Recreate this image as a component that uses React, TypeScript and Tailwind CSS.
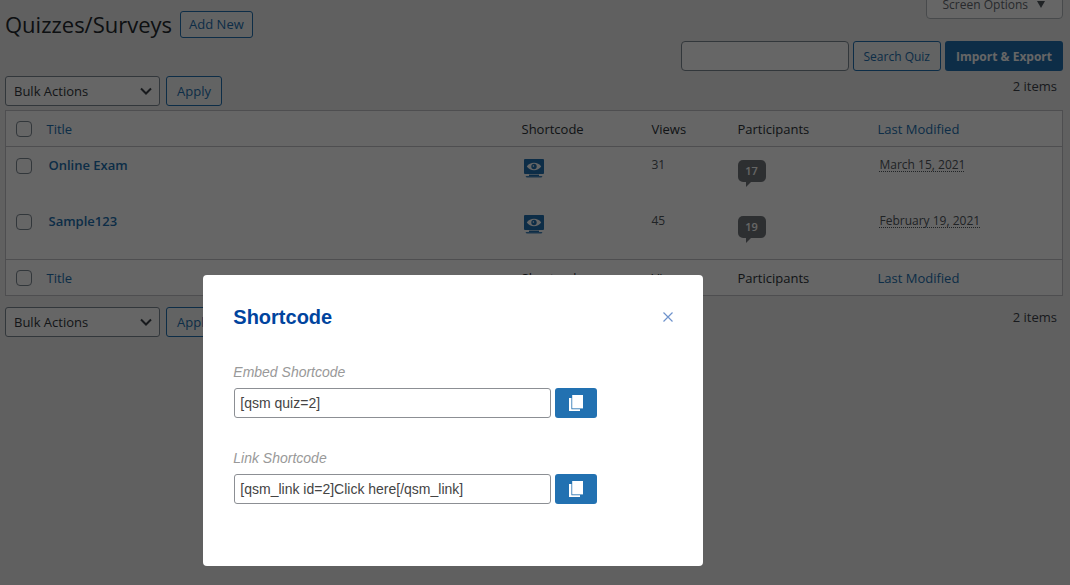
import { useState } from 'react'

interface Quiz {
  id: number
  title: string
  views: number
  participants: number
  modified: string
}

const QUIZZES: Quiz[] = [
  { id: 1, title: 'Online Exam', views: 31, participants: 17, modified: 'March 15, 2021' },
  { id: 2, title: 'Sample123', views: 45, participants: 19, modified: 'February 19, 2021' },
]

const CHECKBOX = 'block size-4 appearance-none rounded-sm border border-[#7e8993] bg-white checked:bg-[#2271b1]'
const BUTTON = 'h-[30px] rounded-[3px] border border-[#2271b1] bg-[#f6f7f7] px-2.5 pt-px text-[#2271b1]'

function ShortcodeIcon() {
  return (
    <svg width="20" height="20" viewBox="0 0 20 20" fill="none" aria-hidden="true">
      <rect x="0" y="0" width="20" height="15" rx="1" fill="#2271b1" />
      <path d="M2.8 7.5C6 2.6 14 2.6 17.2 7.5C14 12.4 6 12.4 2.8 7.5Z" fill="#fff" />
      <circle cx="10" cy="7.5" r="2.7" fill="#2271b1" />
      <circle cx="9.4" cy="7" r="0.8" fill="#fff" />
      <path d="M5 15.6H15V17H5Z" fill="#2271b1" />
      <path d="M1.5 17H18.5L17.5 18.6H2.5Z" fill="#2271b1" fillOpacity="0.85" />
    </svg>
  )
}

function CopyIcon() {
  return (
    <svg width="16" height="18" viewBox="0 0 16 18" fill="none" aria-hidden="true">
      <path d="M1 4H3.4V15.2H12V17H1Z" fill="#fff" />
      <path d="M4.2 1H15V14.4H4.2Z" fill="#fff" />
    </svg>
  )
}

function HeadingRow({ id }: { id: string }) {
  return (
    <tr className="h-9 text-left text-[13px] text-[#2c3338]">
      <th className="pl-2.5">
        <input id={id} type="checkbox" aria-label="Select all" className={CHECKBOX} />
      </th>
      <th className="px-2 pt-0.5 font-normal"><a href="#title" className="text-[#2271b1]">Title</a></th>
      <th className="px-2 pt-0.5 font-normal">Shortcode</th>
      <th className="px-2 pt-0.5 font-normal">Views</th>
      <th className="px-2 pt-0.5 font-normal">Participants</th>
      <th className="px-2 pt-0.5 font-normal"><a href="#modified" className="text-[#2271b1]">Last Modified</a></th>
    </tr>
  )
}

function BulkActions({ id }: { id: string }) {
  return (
    <div className="flex items-start gap-1.5">
      <div className="relative">
        <select
          id={id}
          aria-label="Bulk actions"
          className="h-[30px] w-[155px] appearance-none rounded-[3px] border border-[#7e8993] bg-white px-2 pt-px text-[13px] text-[#32373c]"
        >
          <option>Bulk Actions</option>
          <option>Delete</option>
        </select>
        <svg className="pointer-events-none absolute top-2.5 right-2" width="12" height="10" viewBox="0 0 12 10" fill="none" aria-hidden="true">
          <path d="M1 2.5L6 7.5L11 2.5" stroke="#3c434a" strokeWidth="2" />
        </svg>
      </div>
      <button type="button" className={`${BUTTON} text-[13px]`}>Apply</button>
      <span className="ml-auto pr-1.5 text-[13px] leading-5 text-[#3c434a]">2 items</span>
    </div>
  )
}

function ShortcodeField({ id, label, value }: { id: string; label: string; value: string }) {
  return (
    <div>
      <label htmlFor={id} className="mb-1.5 block text-sm leading-5 text-[#999] italic">{label}</label>
      <div className="flex gap-1 pl-px">
        <input
          id={id}
          type="text"
          readOnly
          value={value}
          className="h-[30px] w-[317px] rounded-[3px] border border-[#8c8f94] bg-white px-[5px] text-sm text-[#444]"
        />
        <button
          type="button"
          aria-label={`Copy ${label}`}
          onClick={() => navigator.clipboard?.writeText(value)}
          className="flex h-[30px] w-[42px] items-center justify-center rounded-[3px] bg-[#2271b1]"
        >
          <CopyIcon />
        </button>
      </div>
    </div>
  )
}

export default function App() {
  const [open, setOpen] = useState(true)

  return (
    <div className="min-h-screen overflow-hidden bg-[#f1f1f1] pr-[7px] pl-[5px] font-['Open_Sans','Noto_Sans',sans-serif]">
      <header className="flex h-[41px] items-start justify-between">
        <div className="flex items-center gap-2 pt-2">
          <h1 className="text-[22px] leading-8 text-[#23282d]">Quizzes/Surveys</h1>
          <a href="#new" className="rounded-[3px] border border-[#2271b1] bg-[#f6f7f7] px-2 text-[13px] leading-[25px] font-medium text-[#2271b1]">Add New</a>
        </div>
        <button type="button" className="-mt-2.5 flex h-[29px] items-center gap-2 rounded-b-sm border border-[#b4b9be] bg-white px-4 text-xs text-[#646970]">
          Screen Options
          <svg width="10" height="9" viewBox="0 0 10 9" aria-hidden="true">
            <path d="M1 1H9L5 8Z" fill="#50575e" />
          </svg>
        </button>
      </header>

      <form className="flex justify-end gap-1" onSubmit={e => e.preventDefault()}>
        <input type="search" aria-label="Search quiz" className="h-[30px] w-[168px] rounded-sm border border-[#7e8993] bg-white px-2 text-[13px]" />
        <button type="submit" className={`${BUTTON} text-xs`}>Search Quiz</button>
        <button type="button" className="h-[30px] rounded-[3px] bg-[#2271b1] px-[11px] pt-px text-xs font-bold text-white">Import &amp; Export</button>
      </form>

      <div className="mt-[5px] mb-1">
        <BulkActions id="bulk-top" />
      </div>

      <table className="w-full table-fixed border-collapse border border-[#c3c4c7] bg-white">
        <colgroup>
          <col className="w-[33px]" />
          <col />
          <col className="w-[130px]" />
          <col className="w-[86px]" />
          <col className="w-[140px]" />
          <col className="w-[193px]" />
        </colgroup>
        <thead className="border-b border-[#c3c4c7]">
          <HeadingRow id="all-top" />
        </thead>
        <tbody>
          {QUIZZES.map(q => (
            <tr key={q.id} className="h-14 align-top text-[13px] leading-5 text-[#50575e] last:h-[57px]">
              <td className="pt-[11px] pl-2.5">
                <input type="checkbox" aria-label={`Select ${q.title}`} className={CHECKBOX} />
              </td>
              <td className="px-2.5 pt-2">
                <a href="#quiz" className="font-semibold text-[#2271b1]">{q.title}</a>
              </td>
              <td className="px-2.5 pt-3">
                <button type="button" aria-label={`Shortcode for ${q.title}`} className="block" onClick={() => setOpen(true)}>
                  <ShortcodeIcon />
                </button>
              </td>
              <td className="px-2 pt-2 text-xs leading-5">{q.views}</td>
              <td className="px-2 pt-[13px]">
                <span className="block h-[22px] w-7 rounded-[5px] bg-[#72777c] text-center text-[11px] leading-[22px] font-semibold text-white">{q.participants}</span>
                <svg className="ml-2 block" width="5" height="5" viewBox="0 0 5 5" aria-hidden="true">
                  <path d="M0 0H5L0 5Z" fill="#72777c" />
                </svg>
              </td>
              <td className="px-2.5 pt-2 text-xs leading-5">
                <abbr className="underline decoration-dotted underline-offset-2">{q.modified}</abbr>
              </td>
            </tr>
          ))}
        </tbody>
        <tfoot className="border-t border-[#c3c4c7]">
          <HeadingRow id="all-bottom" />
        </tfoot>
      </table>

      <div className="mt-[11px]">
        <BulkActions id="bulk-bottom" />
      </div>

      {open && (
        <div className="fixed inset-0 z-10 flex items-start bg-black/60 pt-[275px] pl-[19%]">
          <div
            role="dialog"
            aria-modal="true"
            aria-labelledby="shortcode-title"
            className="w-[500px] max-w-full rounded-sm bg-white px-[30px] pt-7 pb-[62px] font-['Liberation_Sans',Arial,sans-serif]"
          >
            <div className="flex items-center justify-between">
              <h2 id="shortcode-title" className="text-xl leading-7 font-bold text-[#00449e]">Shortcode</h2>
              <button type="button" aria-label="Close" onClick={() => setOpen(false)}>
                <svg width="10" height="10" viewBox="0 0 10 10" fill="none" aria-hidden="true">
                  <path d="M0.5 0.5L9.5 9.5M9.5 0.5L0.5 9.5" stroke="#6f93cc" strokeWidth="1.2" />
                </svg>
              </button>
            </div>
            <div className="mt-[31px] flex flex-col gap-[30px]">
              <ShortcodeField id="embed-shortcode" label="Embed Shortcode" value="[qsm quiz=2]" />
              <ShortcodeField id="link-shortcode" label="Link Shortcode" value="[qsm_link id=2]Click here[/qsm_link]" />
            </div>
          </div>
        </div>
      )}
    </div>
  )
}
